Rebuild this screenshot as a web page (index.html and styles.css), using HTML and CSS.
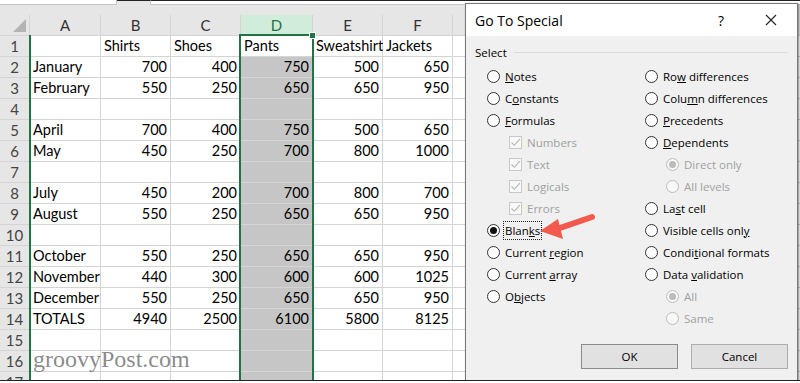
FILE: index.html
```html
<!DOCTYPE html>
<html>
<head>
    <title>Go To Special</title>
    <link rel="stylesheet" href="styles.css">
</head>
<body>
<div class="sheet">
    <div class="topbar">
        <div class="namebox"></div>
        <div class="gapbox"></div>
        <div class="fxbox"></div>
    </div>

    <div class="grid">
        <div class="corner"><span class="tri"></span></div>
        <div class="hd">A</div><div class="hd">B</div><div class="hd">C</div><div class="hd dh">D</div><div class="hd">E</div><div class="hd">F</div><div class="hd"></div>

        <div class="rh">1</div><div class="c"></div><div class="c">Shirts</div><div class="c">Shoes</div><div class="c active">Pants</div><div class="c">Sweatshirt</div><div class="c">Jackets</div><div class="c"></div>
        <div class="rh">2</div><div class="c">January</div><div class="c n">700</div><div class="c n">400</div><div class="c n d">750</div><div class="c n">500</div><div class="c n">650</div><div class="c"></div>
        <div class="rh">3</div><div class="c">February</div><div class="c n">550</div><div class="c n">250</div><div class="c n d">650</div><div class="c n">650</div><div class="c n">950</div><div class="c"></div>
        <div class="rh">4</div><div class="c"></div><div class="c"></div><div class="c"></div><div class="c d"></div><div class="c"></div><div class="c"></div><div class="c"></div>
        <div class="rh">5</div><div class="c">April</div><div class="c n">700</div><div class="c n">400</div><div class="c n d">750</div><div class="c n">500</div><div class="c n">650</div><div class="c"></div>
        <div class="rh">6</div><div class="c">May</div><div class="c n">450</div><div class="c n">250</div><div class="c n d">700</div><div class="c n">800</div><div class="c n">1000</div><div class="c"></div>
        <div class="rh">7</div><div class="c"></div><div class="c"></div><div class="c"></div><div class="c d"></div><div class="c"></div><div class="c"></div><div class="c"></div>
        <div class="rh">8</div><div class="c">July</div><div class="c n">450</div><div class="c n">200</div><div class="c n d">700</div><div class="c n">800</div><div class="c n">700</div><div class="c"></div>
        <div class="rh">9</div><div class="c">August</div><div class="c n">550</div><div class="c n">250</div><div class="c n d">650</div><div class="c n">650</div><div class="c n">950</div><div class="c"></div>
        <div class="rh">10</div><div class="c"></div><div class="c"></div><div class="c"></div><div class="c d"></div><div class="c"></div><div class="c"></div><div class="c"></div>
        <div class="rh">11</div><div class="c">October</div><div class="c n">550</div><div class="c n">250</div><div class="c n d">650</div><div class="c n">650</div><div class="c n">950</div><div class="c"></div>
        <div class="rh">12</div><div class="c">November</div><div class="c n">440</div><div class="c n">300</div><div class="c n d">600</div><div class="c n">600</div><div class="c n">1025</div><div class="c"></div>
        <div class="rh">13</div><div class="c">December</div><div class="c n">550</div><div class="c n">250</div><div class="c n d">650</div><div class="c n">650</div><div class="c n">950</div><div class="c"></div>
        <div class="rh">14</div><div class="c">TOTALS</div><div class="c n">4940</div><div class="c n">2500</div><div class="c n d">6100</div><div class="c n">5800</div><div class="c n">8125</div><div class="c"></div>
        <div class="rh">15</div><div class="c"></div><div class="c"></div><div class="c"></div><div class="c d"></div><div class="c"></div><div class="c"></div><div class="c"></div>
        <div class="rh">16</div><div class="c"></div><div class="c"></div><div class="c"></div><div class="c d"></div><div class="c"></div><div class="c"></div><div class="c"></div>
        <div class="rh">17</div><div class="c"></div><div class="c"></div><div class="c"></div><div class="c d"></div><div class="c"></div><div class="c"></div><div class="c"></div>
    </div>

    <div class="freeze"></div>
    <div class="selection"><span class="handle"></span></div>
    <div class="mark">groovyPost.com</div>

    <div class="dialog">
        <div class="titlebar">
            <span class="title">Go To Special</span>
            <span class="help">?</span>
            <span class="close">
                <svg width="12" height="12" viewBox="0 0 12 12"><path d="M1 1L11 11M11 1L1 11" stroke="#222" stroke-width="1.1" fill="none"/></svg>
            </span>
        </div>

        <div class="legend"><span>Select</span><span class="rule"></span></div>

        <div class="options">
            <div class="col">
                <div class="opt"><span class="radio"></span><span><u>N</u>otes</span></div>
                <div class="opt"><span class="radio"></span><span>C<u>o</u>nstants</span></div>
                <div class="opt"><span class="radio"></span><span><u>F</u>ormulas</span></div>
                <div class="opt sub off"><span class="check"><svg width="11" height="11" viewBox="0 0 11 11"><path d="M1.5 5.5L4.3 8.3L9.8 2.2" stroke="#b4b4b4" stroke-width="1.1" fill="none"/></svg></span><span>Numbers</span></div>
                <div class="opt sub off"><span class="check"><svg width="11" height="11" viewBox="0 0 11 11"><path d="M1.5 5.5L4.3 8.3L9.8 2.2" stroke="#b4b4b4" stroke-width="1.1" fill="none"/></svg></span><span>Text</span></div>
                <div class="opt sub off"><span class="check"><svg width="11" height="11" viewBox="0 0 11 11"><path d="M1.5 5.5L4.3 8.3L9.8 2.2" stroke="#b4b4b4" stroke-width="1.1" fill="none"/></svg></span><span>Logicals</span></div>
                <div class="opt sub off"><span class="check"><svg width="11" height="11" viewBox="0 0 11 11"><path d="M1.5 5.5L4.3 8.3L9.8 2.2" stroke="#b4b4b4" stroke-width="1.1" fill="none"/></svg></span><span>Errors</span></div>
                <div class="opt"><span class="radio on"></span><span class="focus">Blan<u>k</u>s</span></div>
                <div class="opt"><span class="radio"></span><span>Current <u>r</u>egion</span></div>
                <div class="opt"><span class="radio"></span><span>Current <u>a</u>rray</span></div>
                <div class="opt"><span class="radio"></span><span>O<u>b</u>jects</span></div>
            </div>
            <div class="col">
                <div class="opt"><span class="radio"></span><span>Ro<u>w</u> differences</span></div>
                <div class="opt"><span class="radio"></span><span>Colu<u>m</u>n differences</span></div>
                <div class="opt"><span class="radio"></span><span><u>P</u>recedents</span></div>
                <div class="opt"><span class="radio"></span><span><u>D</u>ependents</span></div>
                <div class="opt sub off"><span class="radio on"></span><span>Direct only</span></div>
                <div class="opt sub off"><span class="radio"></span><span>All levels</span></div>
                <div class="opt"><span class="radio"></span><span>La<u>s</u>t cell</span></div>
                <div class="opt"><span class="radio"></span><span>Visible cells onl<u>y</u></span></div>
                <div class="opt"><span class="radio"></span><span>Condi<u>t</u>ional formats</span></div>
                <div class="opt"><span class="radio"></span><span>Data <u>v</u>alidation</span></div>
                <div class="opt sub off"><span class="radio on"></span><span>All</span></div>
                <div class="opt sub off"><span class="radio"></span><span>Same</span></div>
            </div>
        </div>

        <div class="buttons">
            <button class="btn default">OK</button>
            <button class="btn">Cancel</button>
        </div>
    </div>

    <svg class="arrow" width="65" height="36" viewBox="0 0 65 36">
        <path d="M21 21L56 9" stroke="#f25a4d" stroke-width="6" stroke-linecap="round" fill="none"/>
        <polygon points="4,23 22,11 27,31" fill="#f25a4d"/>
    </svg>
</div>
</body>
</html>
```

FILE: styles.css
```css
body { margin: 0; background: #fff; font-family: "Lato", "Liberation Sans", sans-serif; }
.sheet { position: relative; width: 800px; height: 380px; overflow: hidden; background: #e6e6e6; border-bottom: 1px solid #222; }

.topbar { display: flex; height: 5px; margin-bottom: 10px; }
.namebox { width: 116px; background: #fff; border-right: 1px solid #c6c6c6; border-bottom: 1px solid #c6c6c6; }
.gapbox { width: 33px; border-top: 1px solid #222; }
.fxbox { flex: 1; background: #fff; border-top: 1px solid #222; border-left: 1px solid #c6c6c6; border-bottom: 1px solid #c6c6c6; }

.grid { display: grid; grid-template-columns: 29px 70px 69px 69px 71px 69px 69px 1fr; grid-auto-rows: 20px; gap: 1px; background: #d4d4d4; }
.corner { background: #e6e6e6; position: relative; }
.tri { position: absolute; right: 3px; bottom: 3px; width: 0; height: 0; border-left: 13px solid transparent; border-bottom: 13px solid #b4b4b4; }
.hd { background: #e6e6e6; color: #333; font-size: 15px; line-height: 20px; text-align: center; }
.dh { background: #d2ecdc; color: #217346; }
.rh { background: #e6e6e6; color: #444; font-size: 15px; line-height: 20px; text-align: center; }
.c { background: #fff; font-size: 14.5px; line-height: 20px; padding: 0 3px; white-space: nowrap; color: #000; }
.n { text-align: right; }
.d { background: #c6c6c6; }

.freeze { position: absolute; left: 29px; top: 35px; width: 2px; height: 360px; background: #217346; }
.selection { position: absolute; left: 239px; top: 34px; width: 71px; height: 360px; border: 2px solid #217346; }
.handle { position: absolute; right: -4px; top: -4px; width: 5px; height: 5px; background: #217346; border: 1px solid #fff; }
.mark { position: absolute; left: 33px; top: 346px; font-family: "Liberation Serif", serif; font-size: 24px; color: rgba(100, 100, 100, 0.75); }

.dialog { position: absolute; left: 465px; top: 3px; width: 331px; height: 376px; background: #f0f0f0; border: 1px solid #777; box-shadow: 1px 1px 2px rgba(0, 0, 0, 0.5); font-family: "Open Sans", sans-serif; font-size: 11.5px; color: #000; display: flex; flex-direction: column; }
.titlebar { height: 32px; background: #fff; display: flex; align-items: center; padding: 0 11px 0 9px; }
.title { flex: 1; font-size: 14px; }
.help { width: 30px; text-align: center; font-size: 14px; margin-right: 20px; }
.close { width: 30px; display: flex; justify-content: center; }

.legend { display: flex; align-items: center; gap: 7px; height: 16px; margin-top: 8px; padding: 0 9px; }
.rule { flex: 1; height: 1px; background: #dcdcdc; }

.options { display: grid; grid-template-columns: 158px 1fr; margin-top: 5px; padding-left: 21px; }
.opt { display: flex; align-items: center; gap: 5px; height: 22px; white-space: nowrap; }
.sub { padding-left: 22px; }
.col + .col .sub { padding-left: 21px; }
.off { color: #a0a0a0; }
.radio { width: 11px; height: 11px; border: 1px solid #333; border-radius: 50%; background: #fff; position: relative; }
.radio.on::after { content: ""; position: absolute; left: 2px; top: 2px; width: 7px; height: 7px; border-radius: 50%; background: #111; }
.off .radio { border-color: #bcbcbc; background: #f8f8f8; }
.off .radio.on::after { background: #bcbcbc; }
.check { width: 11px; height: 11px; border: 1px solid #c8c8c8; background: #f8f8f8; display: flex; }
.focus { outline: 1px dotted #222; outline-offset: 1px; }

.buttons { display: flex; justify-content: flex-end; gap: 13px; margin-top: 15px; padding-right: 9px; }
.btn { width: 97px; height: 25px; background: #e1e1e1; border: 1px solid #adadad; font-family: "Open Sans", sans-serif; font-size: 11.5px; color: #000; padding: 0; }
.btn.default { border-color: #8c8c8c; }

.arrow { position: absolute; left: 536px; top: 208px; }
```
